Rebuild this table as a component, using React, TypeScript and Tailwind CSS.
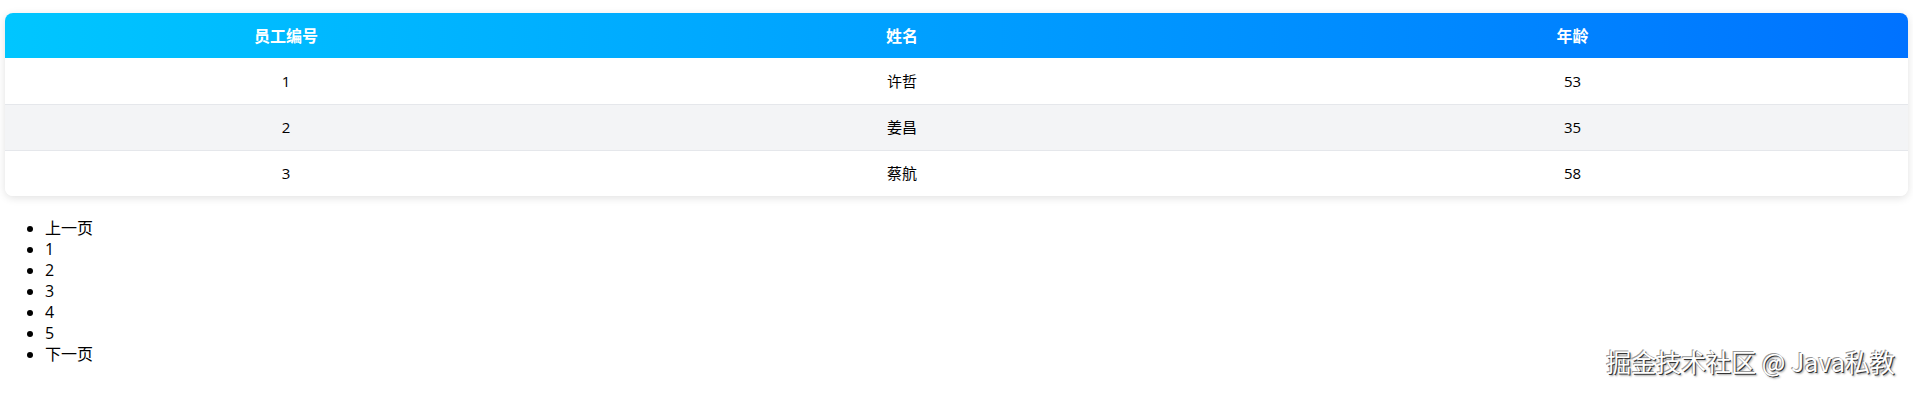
import React from "react"

interface Employee {
    id: number
    name: string
    age: number
}

const employees: Employee[] = [
    { id: 1, name: "许哲", age: 53 },
    { id: 2, name: "姜昌", age: 35 },
    { id: 3, name: "蔡航", age: 58 },
]

const pages = ["上一页", "1", "2", "3", "4", "5", "下一页"]

export default function App() {
    return (
        <div className="relative min-h-[395px] bg-white px-[5px] pt-[13px] text-black font-['Open_Sans','Noto_Sans_CJK_SC',sans-serif]">
            <div className="overflow-hidden rounded-lg shadow-[0_2px_8px_rgba(0,0,0,0.12)]">
                <table className="w-full table-fixed border-collapse text-[15px]">
                    <thead>
                        <tr className="h-[45px] bg-gradient-to-r from-[#00c6ff] to-[#0072ff] text-white">
                            <th className="w-[562px] text-[16px] font-bold">员工编号</th>
                            <th className="w-[670px] text-[16px] font-bold">姓名</th>
                            <th className="text-[16px] font-bold">年龄</th>
                        </tr>
                    </thead>
                    <tbody>
                        {employees.map((emp, i) => (
                            <tr
                                key={emp.id}
                                className={`h-[46px] text-center ${i % 2 === 1 ? "bg-[#f3f4f6]" : "bg-white"} ${i < employees.length - 1 ? "border-b border-[#e5e7eb]" : ""}`}
                            >
                                <td>{emp.id}</td>
                                <td className="font-normal">{emp.name}</td>
                                <td>{emp.age}</td>
                            </tr>
                        ))}
                    </tbody>
                </table>
            </div>
            <ul className="mt-[22px] list-disc pl-[40px] text-[16px] leading-[21px]">
                {pages.map(p => (
                    <li key={p}>{p}</li>
                ))}
            </ul>
            <div className="absolute right-[18px] top-[346px] select-none whitespace-nowrap font-['Noto_Sans_CJK_SC',sans-serif]">
                <span className="relative text-[25px] leading-[30px] text-white [text-shadow:1px_1px_0_#333,-1px_-1px_0_#999,2px_2px_2px_rgba(0,0,0,0.35)]">掘金技术社区 @ Java私教</span>
            </div>
        </div>
    )
}
